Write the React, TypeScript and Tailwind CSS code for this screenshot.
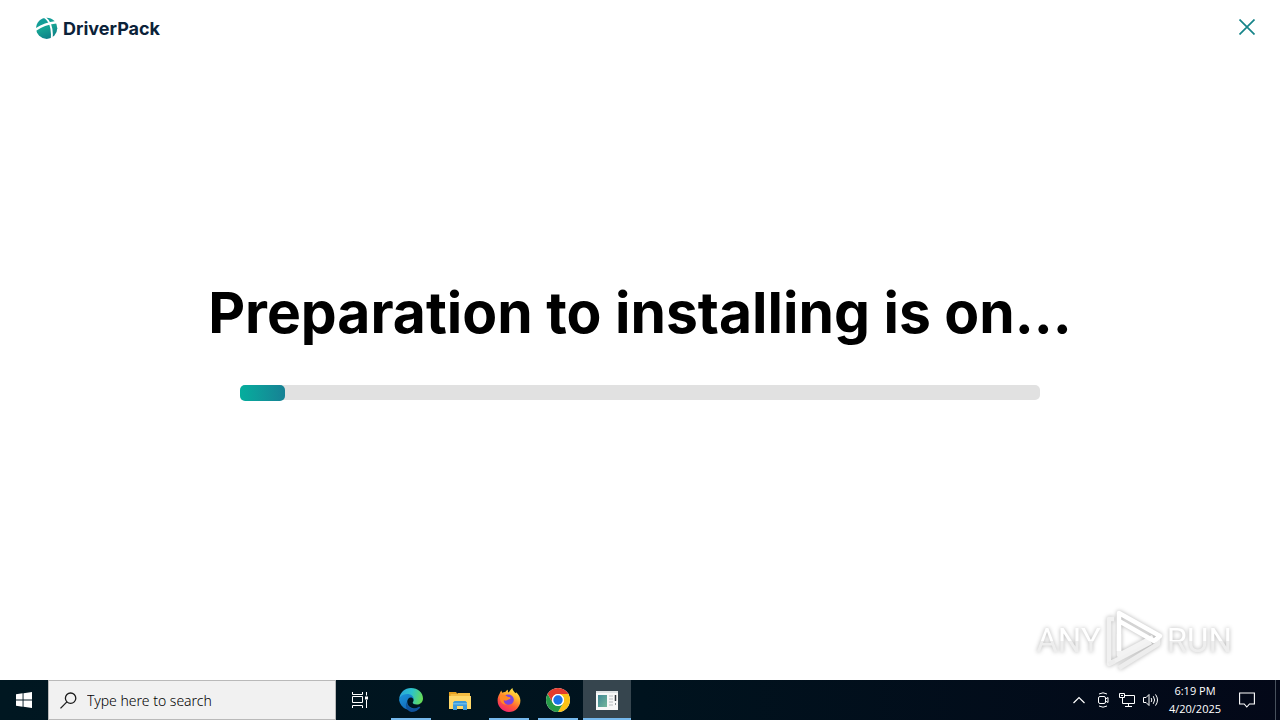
import React from "react";

function DriverPackLogo() {
  return (
    <svg className="size-[22px] shrink-0" viewBox="0 0 22 22" aria-hidden="true">
      <defs>
        <linearGradient id="dp" x1="0.2" y1="0" x2="0.6" y2="1">
          <stop offset="0" stopColor="#12999a" />
          <stop offset="0.5" stopColor="#16a393" />
          <stop offset="1" stopColor="#0e8088" />
        </linearGradient>
      </defs>
      <circle cx="10.7" cy="11.3" r="10.6" fill="url(#dp)" />
      <path d="M-.5 12.8C5.5 8.5 11 6.5 20 5.3" fill="none" stroke="#fff" strokeWidth="2.4" />
      <path d="M8 0C13.5 3 17 11 15.6 22" fill="none" stroke="#fff" strokeWidth="1.9" />
    </svg>
  );
}

function Watermark() {
  return (
    <div
      aria-hidden="true"
      className="pointer-events-none absolute right-12 bottom-2 flex items-center gap-[3px] font-['Roboto',sans-serif] text-[33px] leading-[62px] drop-shadow-[0_0_2px_rgba(0,0,0,0.3)]"
    >
      <span className="bg-linear-to-b from-white from-50% to-[#eeeeee] to-50% bg-clip-text text-transparent">ANY</span>
      <svg className="h-[62px] w-[60px]" viewBox="0 0 60 62">
        <g fill="none" strokeWidth="4.5" strokeLinejoin="round">
          <path d="M10 9H5V54L47 32" stroke="#f1f1f1" />
          <path d="M15 24V45L49 27" stroke="#f3f3f3" />
          <path d="M5 54L11 51M15 58L54 34V29" stroke="#ededed" />
          <path d="M15 41V3L56 26 50 31 15 11" stroke="#fff" />
        </g>
      </svg>
      <span className="bg-linear-to-b from-white from-50% to-[#eeeeee] to-50% bg-clip-text text-transparent">RUN</span>
    </div>
  );
}

function EdgeIcon() {
  return (
    <svg className="size-6" viewBox="0 0 24 24" aria-hidden="true">
      <defs>
        <linearGradient id="edgeTop" x1="0" y1="0.3" x2="1" y2="0.5">
          <stop offset="0" stopColor="#2aa5dc" />
          <stop offset="0.5" stopColor="#2cc3cb" />
          <stop offset="1" stopColor="#66dc55" />
        </linearGradient>
        <linearGradient id="edgeLow" x1="0" y1="0" x2="0.7" y2="1">
          <stop offset="0" stopColor="#1b94dc" />
          <stop offset="1" stopColor="#1267b4" />
        </linearGradient>
      </defs>
      <path d="M.2 11C.8 4.6 5.8.1 12 .1c6.8 0 12 4.7 12 10.3 0 3.6-2.8 6.1-6.3 6.1-2.5 0-4-.9-4-1.7 0-.7.9-1 .9-2.7 0-2.6-2.6-5.2-6.3-5.2C4.8 6.9 1.7 8.2.2 11z" fill="url(#edgeTop)" />
      <path d="M.1 12.2C.2 8.9 3.8 6 8.3 6c4 0 6.7 2.7 6.3 5.3-.8-1.2-1.7-1.8-2.8-1.8-2 0-3.6 2-3.6 4.3 0 5 5.2 7.4 9.7 6.6A12 12 0 0 1 .1 12.2z" fill="url(#edgeLow)" />
      <path d="M8.2 13.5c-1 5.2 5.3 9.3 10.8 5.7.9-.5 2.6-.7 2.1.5C19 22.4 16 24 12.5 24 7.7 23 5.2 18 8.2 13.5z" fill="#0f529c" />
    </svg>
  );
}

function FolderIcon() {
  return (
    <svg className="h-[19px] w-[22px]" viewBox="0 0 22 19" aria-hidden="true">
      <path d="M0 1h7l1.5 2H21v4H0z" fill="#e6a11e" />
      <path d="M1.5 3H8l1-1h12v3H1.5z" fill="#f4bd42" />
      <path d="M0 5h22v13H0z" fill="#ffd869" />
      <path d="M4 19v-7.5L5.5 10h11l1.5 1.5V19h-4v-4H8v4z" fill="#3d9bd9" />
      <path d="M4 12h14v1.5H4z" fill="#67b9ea" />
    </svg>
  );
}

function FirefoxIcon() {
  return (
    <svg className="size-6" viewBox="0 0 24 24" aria-hidden="true">
      <defs>
        <linearGradient id="fox" x1="0.8" y1="0" x2="0.25" y2="1">
          <stop offset="0" stopColor="#fff14d" />
          <stop offset="0.35" stopColor="#ffb02d" />
          <stop offset="0.65" stopColor="#ff5a36" />
          <stop offset="1" stopColor="#ef2075" />
        </linearGradient>
      </defs>
      <path d="M2.6 5.8C3 4 4 2.7 4.5 2.4c0 1 .4 1.8.8 2.3.8-.6 1.9-.9 3-.8C9 2.8 10 2 11 1.7c-.3.9-.2 2 .4 2.8C12.7 3.8 13.2 1.6 15.4 0c.2 2.5 2 3.8 3.2 5.2l.5-1c2.6 2 4.3 4.9 4.3 8.4A11.4 11.4 0 0 1 .6 12.5c0-2.5.7-4.8 2-6.7z" fill="url(#fox)" />
      <path d="M8 7.5c2.7-2.4 8.5-.7 8.8 3.9.2 3-2.2 5.3-5 5.3-3.2 0-5.2-2.2-4.9-4.8 1.6 1.4 3.3.4 4.4-.4 1-.6 2-.5 2-1.3-.1-.8-1.7-.4-2.5-1.1-.7-.7-1.6-1.2-2.8-1.6z" fill="#7a45dd" />
      <path d="M3 8c1.4-1.4 4-1.5 5.5-.4 1 .7 1.6 1.4 2.5 1.5 1 .1 2.4.1 2.4.8 0 1-1.6.9-2.7 1.6-1.2.8-2.7 1.4-4 .2-.5 2.2.8 4.5 3.5 4.9C5.5 17.2 2 13 3 8z" fill="#ff8a25" />
    </svg>
  );
}

function ChromeIcon() {
  return (
    <svg className="size-6" viewBox="0 0 24 24" aria-hidden="true">
      <circle cx="12" cy="12" r="12" fill="#fff" />
      <path d="M12 6h10.39A12 12 0 0 0 1.61 6L6.8 15A6 6 0 0 1 12 6z" fill="#e33b2e" />
      <path d="M17.2 15L12 24A12 12 0 0 0 22.39 6H12a6 6 0 0 1 5.2 9z" fill="#fbc116" />
      <path d="M6.8 15L1.61 6A12 12 0 0 0 12 24l5.2-9a6 6 0 0 1-10.4 0z" fill="#269a48" />
      <circle cx="12" cy="12" r="6" fill="#fff" />
      <circle cx="12" cy="12" r="4.7" fill="#1a73e8" />
    </svg>
  );
}

function SetupIcon() {
  return (
    <svg className="h-[19px] w-[22px]" viewBox="0 0 22 19" aria-hidden="true">
      <path d="M0 0h22v19H0z" fill="#f7f7f7" />
      <path d="M0 0h22v2H0z" fill="#dfe3e5" />
      <defs>
        <linearGradient id="pane" x1="0" y1="0" x2="1" y2="1">
          <stop offset="0" stopColor="#3f8795" />
          <stop offset="1" stopColor="#72b59a" />
        </linearGradient>
      </defs>
      <path d="M2 4h9v12H2z" fill="url(#pane)" />
      <path d="M13 5h4M13 8h4M13 11h4M13 14h4" stroke="#b7bcbf" />
      <path d="M19.5 4v6" stroke="#30363b" strokeWidth="1.5" />
      <path d="M19.5 12v2" stroke="#8a8f93" />
    </svg>
  );
}

const apps = [
  { name: "Microsoft Edge", icon: <EdgeIcon />, open: true, active: false },
  { name: "File Explorer", icon: <FolderIcon />, open: false, active: false },
  { name: "Firefox", icon: <FirefoxIcon />, open: true, active: false },
  { name: "Google Chrome", icon: <ChromeIcon />, open: true, active: false },
  { name: "DriverPack", icon: <SetupIcon />, open: true, active: true },
];

function Taskbar() {
  return (
    <footer className="flex h-10 shrink-0 bg-linear-to-r from-[#001721] via-[#00131e] to-[#030818] font-['Open_Sans','Noto_Sans',sans-serif] text-white">
      <button aria-label="Start" className="flex w-12 items-center justify-center">
        <svg className="size-4" viewBox="0 0 16 16" fill="#fff" aria-hidden="true">
          <path d="M0 2.2L6.6 1.3V7.5H0zM7.5 1.2L16 0V7.5H7.5zM0 8.4H6.6V14.7L0 13.8zM7.5 8.4H16V16L7.5 14.8z" />
        </svg>
      </button>
      <label className="flex w-72 items-center gap-2.5 border border-[#b9b9b9] bg-[#f1f1f1] pl-[11px]">
        <svg className="size-[17px] shrink-0" viewBox="0 0 17 17" fill="none" stroke="#1b1b1b" strokeWidth="1.3" aria-hidden="true">
          <circle cx="10.6" cy="6.2" r="5.2" />
          <path d="M6.9 9.9L.5 16.4" />
        </svg>
        <input
          type="text"
          aria-label="Search"
          placeholder="Type here to search"
          className="w-full min-w-0 bg-transparent pt-0.5 font-['Noto_Sans',sans-serif] text-[14px] leading-5 font-light text-black outline-none placeholder:text-black placeholder:opacity-100"
        />
      </label>
      <button aria-label="Task View" className="flex w-12 items-center justify-center">
        <svg className="size-4" viewBox="0 0 16 16" fill="none" stroke="#fff" aria-hidden="true">
          <path d="M.5 0v2.5h10V0M.5 16v-2.5h10V16M.5 4.5h10v6H.5zM14.5 0v3.5M14.5 8v8" />
          <path d="M13 4.5h3v3h-3z" fill="#fff" stroke="none" />
        </svg>
      </button>
      <div className="flex gap-px pl-[3px]">
        {apps.map((a) => (
          <button
            key={a.name}
            aria-label={a.name}
            className={
              a.active
                ? "flex w-12 flex-col items-center bg-[#36454e]"
                : "flex w-12 flex-col items-center"
            }
          >
            <span className="flex flex-1 items-center pt-0.5">{a.icon}</span>
            <span
              className={
                a.active
                  ? "h-0.5 w-full bg-[#76b9ed]"
                  : a.open
                    ? "h-0.5 w-10 bg-[#76b9ed]"
                    : "h-0.5 w-10"
              }
            />
          </button>
        ))}
      </div>
      <div className="ml-auto flex items-center">
        <button aria-label="Show hidden icons" className="flex w-6 justify-center">
          <svg className="h-2 w-3" viewBox="0 0 12 8" fill="none" stroke="#fff" strokeWidth="1.2" aria-hidden="true">
            <path d="M.5 7L6 1.5 11.5 7" />
          </svg>
        </button>
        <button aria-label="Meet Now" className="flex w-6 justify-center">
          <svg className="h-4 w-3" viewBox="0 0 12 16" fill="none" stroke="#fff" aria-hidden="true">
            <rect x="1.5" y="4.5" width="7" height="7" rx="1.5" />
            <path d="M8.5 7L11 5.5v5L8.5 9M2 2Q6 -.4 10 2M2 14Q6 16.4 10 14" />
          </svg>
        </button>
        <button aria-label="Network" className="flex w-6 justify-center">
          <svg className="h-4 w-4" viewBox="0 0 16 16" fill="none" stroke="#fff" aria-hidden="true">
            <path d="M6 3.5h9.5v8h-12V8M9.5 11.5v3M6 14.5h7" />
            <path d="M.5 1.5h5v4h-5zM3.5 5.5v3M2 3.5h2" />
          </svg>
        </button>
        <button aria-label="Volume" className="flex w-6 justify-center">
          <svg className="h-4 w-4" viewBox="0 0 16 16" fill="none" stroke="#fff" aria-hidden="true">
            <path d="M.5 5.5h2.6L6 2.5v11L3.1 10.5H.5z" />
            <path d="M8.2 6Q9.4 8 8.2 10M10.3 4.2Q12.9 8 10.3 11.8M12.5 2.4Q16.5 8 12.5 13.6" />
          </svg>
        </button>
        <time className="w-16 text-center text-[11px] leading-[18px] font-medium">
          <span className="block">6:19 PM</span>
          <span className="block">4/20/2025</span>
        </time>
        <button aria-label="Notifications" className="flex w-10 justify-center">
          <svg className="size-4" viewBox="0 0 16 16" fill="none" stroke="#fff" strokeWidth="1.1" aria-hidden="true">
            <path d="M.6 1h14.8v11H10.5L7.8 15 5.2 12H.6z" />
          </svg>
        </button>
        <button aria-label="Show desktop" className="ml-2 h-10 w-[5px] border-l border-[#47505c]" />
      </div>
    </footer>
  );
}

export default function App() {
  return (
    <div className="flex min-h-screen flex-col bg-white text-black">
      <div className="relative flex flex-1 flex-col">
        <header className="flex h-14 items-center justify-between pr-6 pl-9">
          <div className="flex items-center gap-[5px]">
            <DriverPackLogo />
            <span className="pt-px font-['Inter',sans-serif] text-[18px] leading-6 font-bold text-[#0b2239]">
              DriverPack
            </span>
          </div>
          <button aria-label="Close" className="p-px pb-[3px]">
            <svg className="size-4" viewBox="0 0 16 16" fill="none" stroke="#168489" strokeWidth="1.7" aria-hidden="true">
              <path d="M.5 .5l15 15M15.5 .5l-15 15" />
            </svg>
          </button>
        </header>
        <main className="flex flex-1 flex-col items-center justify-center gap-10 px-8 pb-14">
          <h1 className="text-center font-['Inter',sans-serif] text-[57px] leading-[64px] font-bold">
            Preparation to installing is on...
          </h1>
          <div
            role="progressbar"
            aria-label="Preparation progress"
            aria-valuenow={6}
            className="h-[15px] w-full max-w-[800px] rounded-[5px] bg-[#e1e1e1]"
          >
            <div className="h-4 w-[45px] rounded-[5px] bg-linear-to-r from-[#04ae9d] to-[#168194]" />
          </div>
        </main>
        <Watermark />
      </div>
      <Taskbar />
    </div>
  );
}
